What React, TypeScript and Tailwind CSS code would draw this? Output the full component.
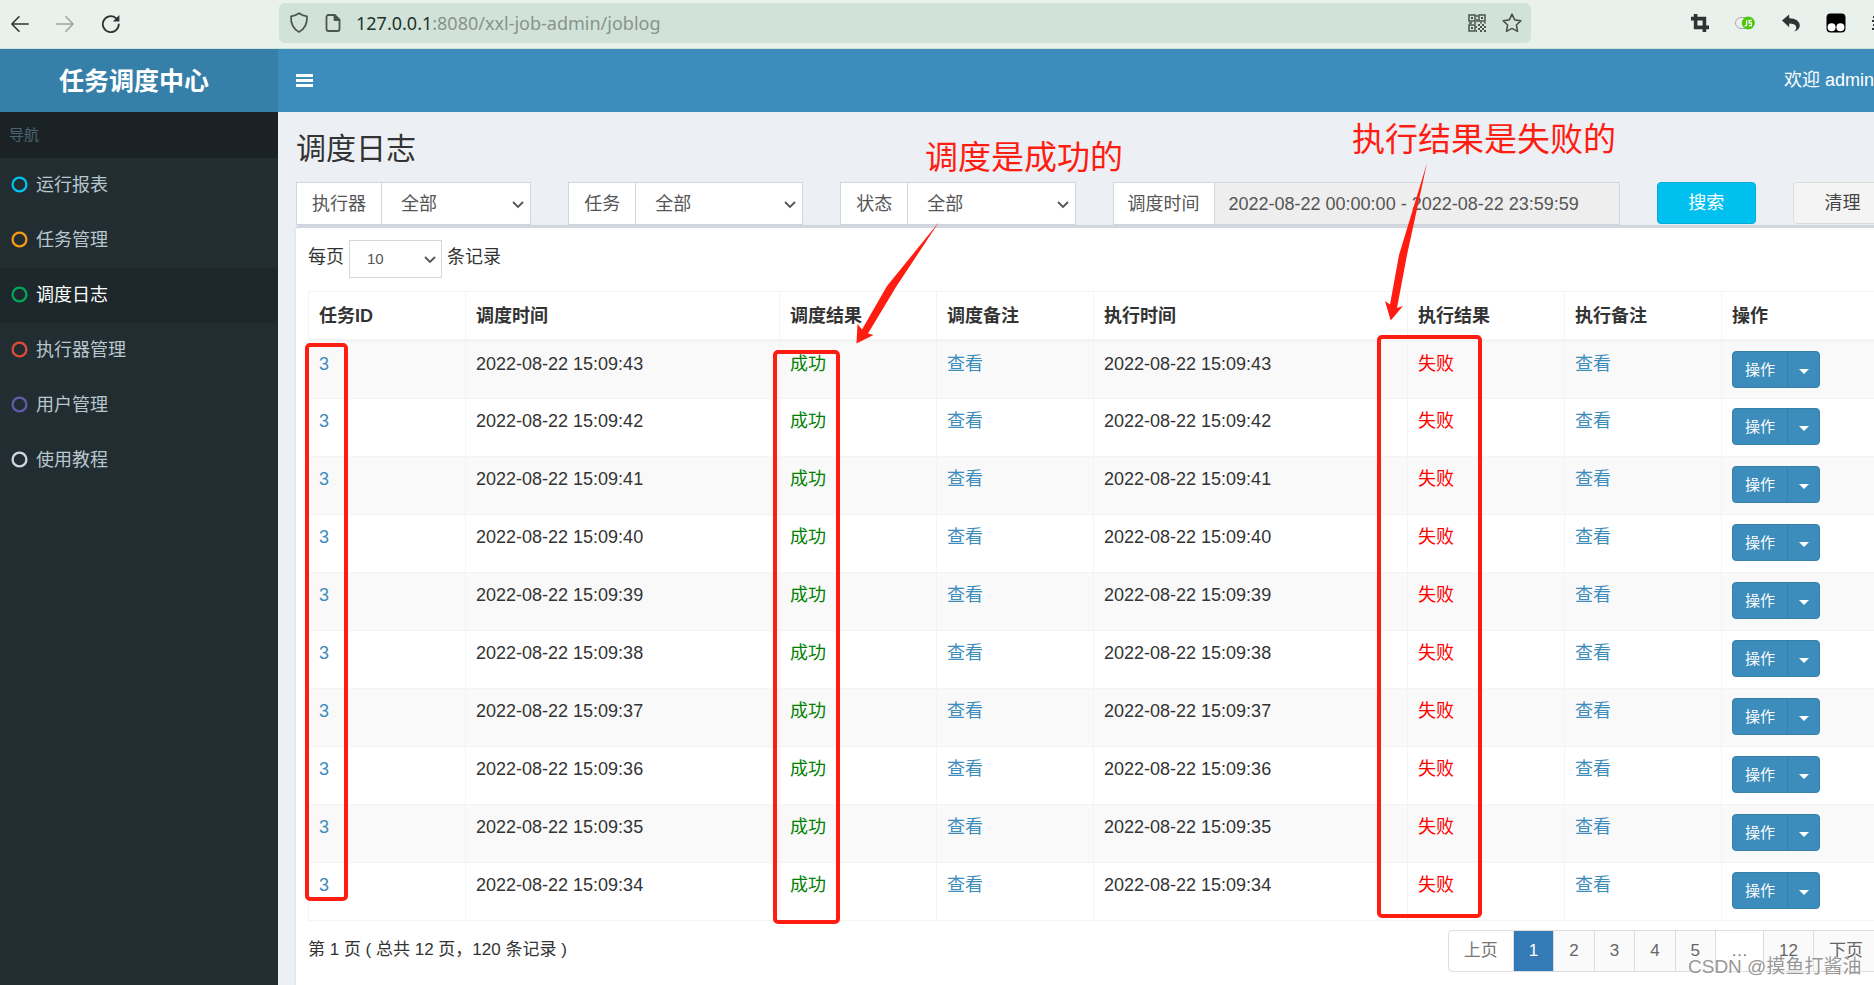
import { useState, type ReactNode } from "react";
import clsx from "clsx";

const navItems = [
  { label: "运行报表", color: "text-[#00c0ef]" },
  { label: "任务管理", color: "text-[#f39c12]" },
  { label: "调度日志", color: "text-[#00a65a]" },
  { label: "执行器管理", color: "text-[#dd4b39]" },
  { label: "用户管理", color: "text-[#605ca8]" },
  { label: "使用教程", color: "text-[#d2d6de]" },
];

const columns = [
  { label: "任务ID", width: "w-[10%]" },
  { label: "调度时间", width: "w-[20%]" },
  { label: "调度结果", width: "w-[10%]" },
  { label: "调度备注", width: "w-[10%]" },
  { label: "执行时间", width: "w-[20%]" },
  { label: "执行结果", width: "w-[10%]" },
  { label: "执行备注", width: "w-[10%]" },
  { label: "操作", width: "w-[10%]" },
];

const logs = [43, 42, 41, 40, 39, 38, 37, 36, 35, 34].map((second) => ({
  jobId: 3,
  time: `2022-08-22 15:09:${second}`,
}));

const pages = ["上页", "1", "2", "3", "4", "5", "…", "12", "下页"];

function Chevron({ className }: { className?: string }) {
  return (
    <svg
      viewBox="0 0 12 8"
      className={clsx("pointer-events-none absolute h-2 w-3", className)}
      fill="none"
      stroke="#555"
      strokeWidth="1.8"
      aria-hidden="true"
    >
      <path d="M1 1l5 5 5-5" />
    </svg>
  );
}

function BrowserBar() {
  return (
    <div className="flex h-[49px] items-center overflow-hidden border-b border-[#d0e2d8] bg-[#e9f1ec] text-[#2f3432]">
      <div className="flex w-[279px] shrink-0 items-center gap-[27px] pl-[11px]">
        <button type="button" aria-label="Back">
          <svg viewBox="0 0 18 18" className="size-[18px]" fill="none" stroke="currentColor" strokeWidth="1.6" strokeLinecap="round" strokeLinejoin="round">
            <path d="M17.2 9H1M8 1.8L.9 9 8 16.2" />
          </svg>
        </button>
        <button type="button" aria-label="Forward" className="text-[#9da4a0]">
          <svg viewBox="0 0 18 18" className="size-[18px]" fill="none" stroke="currentColor" strokeWidth="1.6" strokeLinecap="round" strokeLinejoin="round">
            <path d="M.8 9H17M10 1.8L17.1 9 10 16.2" />
          </svg>
        </button>
        <button type="button" aria-label="Reload">
          <svg viewBox="0 0 20 20" className="size-5" fill="none" stroke="currentColor" strokeWidth="1.8" strokeLinecap="round">
            <path d="M17.8 10.3A8 8 0 1 1 15 4.1" />
            <path d="M18.4 1v6.6h-6.6z" fill="currentColor" stroke="none" />
          </svg>
        </button>
      </div>

      <div className="mb-[3px] flex h-10 min-w-0 flex-1 items-center rounded-md bg-[#d1e3d9] pl-[10px] pr-[9px] text-[#4b5450]">
        <svg viewBox="0 0 20 21" className="h-[21px] w-5 shrink-0" fill="none" stroke="currentColor" strokeWidth="1.7" strokeLinejoin="round">
          <path d="M10 1.2c2.5 1.8 5 2.7 8 3.1.3 6.5-1.5 12.5-8 15.6C3.5 16.8 1.7 10.8 2 4.3c3-.4 5.5-1.3 8-3.1z" />
        </svg>
        <svg viewBox="0 0 16 18" className="ml-4 h-[18px] w-4 shrink-0" fill="none" stroke="currentColor" strokeWidth="1.8" strokeLinejoin="round">
          <path d="M9.5 1h-6a2 2 0 0 0-2 2v12a2 2 0 0 0 2 2h9a2 2 0 0 0 2-2V6z" />
          <path d="M9.5 1v5h5z" fill="currentColor" />
        </svg>
        <div className="ml-[15px] min-w-0 flex-1 truncate font-['Noto_Sans',sans-serif] text-[18px] text-[#87938d]">
          <span className="text-[#26302b]">127.0.0.1</span>:8080/xxl-job-admin/joblog
        </div>
        <button type="button" aria-label="QR code">
          <svg viewBox="0 0 18 18" className="size-[18px]" fill="none" stroke="currentColor" strokeWidth="1.5">
            <path d="M1 1h6v6H1zM11 1h6v6h-6zM1 11h6v6H1z" />
            <path d="M3 3h2v2H3zM13 3h2v2h-2zM3 13h2v2H3zM8.2 1h1.6v2H8.2zM8.2 5h1.6v3H8.2zM1 8.2h3v1.6H1zM6 8.2h2v1.6H6zM10 10h2v2h-2zM14 10h2v2h-2zM12 12h2v2h-2zM16 12h2v2h-2zM10 14h2v2h-2zM14 14h2v2h-2zM12 16h2v2h-2zM16 16h2v2h-2zM12 8.2h2v1.2h-2zM16 8.2h2v1.2h-2zM8 12h1v2H8zM8 16h1v2H8z" fill="currentColor" stroke="none" />
          </svg>
        </button>
        <button type="button" aria-label="Bookmark" className="ml-4">
          <svg viewBox="0 0 20 20" className="size-5" fill="none" stroke="currentColor" strokeWidth="1.6" strokeLinejoin="round">
            <path d="M10 1.2l2.7 5.7 6.2.8-4.5 4.3 1.1 6.4-5.5-3-5.5 3 1.1-6.4L1.1 7.7l6.2-.8z" />
          </svg>
        </button>
      </div>

      <div className="flex w-[343px] shrink-0 items-center justify-end pb-[3px]">
        <svg viewBox="0 0 18 18" className="size-[18px]" fill="none" stroke="currentColor" strokeWidth="3.6">
          <path d="M4.6 0v13.4H18M0 4.6h13.4V18" />
        </svg>
        <svg viewBox="0 0 20 14" className="ml-[26px] h-[14px] w-5">
          <rect x=".5" y="1.5" width="16" height="11" rx="5.5" fill="#eee" stroke="#aaa" />
          <circle cx="13.3" cy="7" r="6.5" fill="#4cc70c" />
          <path d="M11.6 4.2v4.6q0 1-1.2 1h-.8M16.8 4.4h-2.6v2.5h2.2v2.7h-2.6" fill="none" stroke="#fff" strokeWidth="1.3" />
        </svg>
        <svg viewBox="0 0 18 18" className="ml-[27px] size-[18px]" fill="currentColor">
          <path d="M0 6.6L7.2.5v3.8c6.5.2 10.6 3 10.6 7.3 0 3-2.2 5.2-5.8 6 2-1.6 2.7-3.3 2-5.2-.8-2-3-2.8-6.8-2.8v3.6z" />
        </svg>
        <svg viewBox="0 0 20 20" className="ml-[26px] size-5">
          <rect x=".5" y=".5" width="19" height="19" rx="4" fill="#000" />
          <circle cx="5.6" cy="14.2" r="4" fill="#fff" />
          <circle cx="14.4" cy="14.2" r="4" fill="#fff" />
        </svg>
        <svg viewBox="0 0 2 14" className="ml-[26px] h-[14px] w-[2px]" fill="currentColor">
          <path d="M1 0h1v2H1zM0 4h2v2H0zM1 8h1v2H1zM0 12h2v2H0z" />
        </svg>
      </div>
    </div>
  );
}

function FilterSelect({ id, label }: { id: string; label: string }) {
  return (
    <div className="flex h-[43px] border border-[#d2d6de] bg-white text-[#555]">
      <label htmlFor={id} className="flex shrink-0 items-center border-r border-[#d2d6de] px-[15px]">
        {label}
      </label>
      <div className="relative flex-1">
        <select id={id} className="h-full w-full appearance-none bg-transparent pl-[19px] outline-none">
          <option>全部</option>
        </select>
        <Chevron className="right-[6px] top-[18px]" />
      </div>
    </div>
  );
}

function ActionButton() {
  return (
    <div className="flex h-[37px] w-[88px] overflow-hidden rounded border border-[#367fa9] bg-[#3c8dbc] text-[15px] text-white">
      <button type="button" className="flex-1 border-r border-[#367fa9]">
        操作
      </button>
      <button type="button" aria-label="更多操作" className="flex w-[31px] items-center justify-center">
        <svg viewBox="0 0 10 5" className="mt-1 h-[5px] w-[10px]" fill="currentColor">
          <path d="M0 0h10L5 5z" />
        </svg>
      </button>
    </div>
  );
}

function Cell({ children }: { children: ReactNode }) {
  return <td className="h-[58px] border border-[#f4f4f4] py-[9px] pl-[10px] align-top">{children}</td>;
}

/** Hand-drawn notes that float over the log table. */
function Annotations() {
  return (
    <div className="pointer-events-none absolute inset-0 text-[#ff1d12]">
      <div className="absolute left-[925px] top-[134px] whitespace-nowrap text-[33px] leading-[48px]">调度是成功的</div>
      <div className="absolute left-[1352px] top-[116px] whitespace-nowrap text-[33px] leading-[48px]">执行结果是失败的</div>
      <svg className="absolute left-0 top-0" width="1874" height="985" viewBox="0 0 1874 985" fill="currentColor">
        <path d="M939 222L887 286 862 329.500 857.500 324 856.500 343.500 873.500 335 868 333.500 896 287z" />
        <path d="M1427 163L1399 255 1390 304.500 1385 301 1390.700 320.500 1403 306 1397 308 1407 255z" />
      </svg>
      <div className="absolute left-[305px] top-[343px] h-[558px] w-[43px] rounded-[5px] border-4" />
      <div className="absolute left-[773px] top-[350px] h-[574px] w-[67px] rounded-[5px] border-4" />
      <div className="absolute left-[1377px] top-[335px] h-[583px] w-[105px] rounded-[5px] border-4" />
      <div className="absolute left-[1688px] top-[953px] whitespace-nowrap text-[19px] leading-[28px] text-[#8a8a8a]/90 [text-shadow:1px_1px_0_#fff]">
        CSDN @摸鱼打酱油
      </div>
    </div>
  );
}

export default function App() {
  const [active, setActive] = useState("调度日志");

  return (
    <div className="relative flex min-h-screen flex-col overflow-hidden bg-[#ecf0f5] font-['Liberation_Sans','Noto_Sans_CJK_SC',sans-serif] text-[18px] leading-[26px] text-[#333]">
      <BrowserBar />

      {/* Header */}
      <header className="flex h-[63px] text-white">
        <a href="#home" className="flex w-[278px] shrink-0 items-center justify-center bg-[#367fa9] pr-[10px] text-[25px] font-bold">
          任务调度中心
        </a>
        <div className="flex min-w-0 flex-1 items-center justify-between bg-[#3c8dbc] pb-px pl-[18px]">
          <button type="button" aria-label="切换导航">
            <svg viewBox="0 0 17 13" className="h-[13px] w-[17px]" fill="currentColor">
              <path d="M0 0h17v3H0zM0 5h17v3H0zM0 10h17v3H0z" />
            </svg>
          </button>
          <a href="#user" className="whitespace-nowrap">
            欢迎 admin
          </a>
        </div>
      </header>

      <div className="flex flex-1">
        {/* Sidebar */}
        <aside className="w-[278px] shrink-0 bg-[#222d32]">
          <div className="flex h-[46px] items-center bg-[#1a2226] pl-[9px] text-[15px] text-[#4b646f]">导航</div>
          <nav>
            {navItems.map((item) => (
              <a
                key={item.label}
                href="#nav"
                onClick={() => setActive(item.label)}
                className={clsx(
                  "flex h-[55px] items-center gap-2 pb-[2px] pl-[11px]",
                  active === item.label ? "bg-[#1e282c] text-white" : "text-[#b8c7ce]",
                )}
              >
                <svg viewBox="0 0 17 17" className={clsx("size-[17px]", item.color)} fill="none" stroke="currentColor" strokeWidth="2.3">
                  <circle cx="8.5" cy="8.5" r="6.9" />
                </svg>
                {item.label}
              </a>
            ))}
          </nav>
        </aside>

        {/* Content, wider than the window on the right */}
        <main className="-mr-[18px] flex min-w-0 flex-1 flex-col pl-[18px]">
          <h1 className="pt-[19px] text-[30px] leading-9">调度日志</h1>

          <form className="mt-[15px] grid grid-cols-12 gap-x-[37px]" onSubmit={(e) => e.preventDefault()}>
            <div className="col-span-2">
              <FilterSelect id="group" label="执行器" />
            </div>
            <div className="col-span-2">
              <FilterSelect id="job" label="任务" />
            </div>
            <div className="col-span-2">
              <FilterSelect id="status" label="状态" />
            </div>
            <div className="col-span-4 flex h-[43px] border border-[#d2d6de] bg-white text-[#555]">
              <label htmlFor="time" className="flex shrink-0 items-center border-r border-[#d2d6de] px-[14px]">
                调度时间
              </label>
              <input
                id="time"
                readOnly
                defaultValue="2022-08-22 00:00:00 - 2022-08-22 23:59:59"
                className="min-w-0 flex-1 bg-[#eee] pl-[14px] outline-none"
              />
            </div>
            <button type="submit" className="h-[42px] rounded border border-[#00acd6] bg-[#00c0ef] text-white">
              搜索
            </button>
            <button type="button" className="h-[42px] rounded border border-[#ddd] bg-[#f4f4f4] text-[#444]">
              清理
            </button>
          </form>

          {/* Log box */}
          <section className="flex-1 rounded-t border-t-[3px] border-[#d2d6de] bg-white pl-3 pr-[13px] pt-3 shadow-sm">
            <div className="flex h-[38px] items-center gap-[5px]">
              <label htmlFor="pageSize" className="pb-1">
                每页
              </label>
              <div className="relative h-[38px] w-[93px]">
                <select id="pageSize" className="h-full w-full appearance-none border border-[#d2d6de] bg-white pl-[17px] text-[15px] text-[#555] outline-none">
                  <option>10</option>
                </select>
                <Chevron className="right-[6px] top-4" />
              </div>
              <span className="pb-1">条记录</span>
            </div>

            <table className="mt-[13px] w-full table-fixed border-collapse">
              <thead>
                <tr>
                  {columns.map((col) => (
                    <th
                      key={col.label}
                      className={clsx("h-[49px] border border-b-[3px] border-[#f4f4f4] pl-[10px] text-left font-bold", col.width)}
                    >
                      {col.label}
                    </th>
                  ))}
                </tr>
              </thead>
              <tbody>
                {logs.map((log) => (
                  <tr key={log.time} className="odd:bg-[#f9f9f9]">
                    <Cell>
                      <a href="#job" className="text-[#3c8dbc]">{log.jobId}</a>
                    </Cell>
                    <Cell>{log.time}</Cell>
                    <Cell>
                      <span className="text-[#008000]">成功</span>
                    </Cell>
                    <Cell>
                      <a href="#trigger" className="text-[#3c8dbc]">查看</a>
                    </Cell>
                    <Cell>{log.time}</Cell>
                    <Cell>
                      <span className="text-[#ff0000]">失败</span>
                    </Cell>
                    <Cell>
                      <a href="#handle" className="text-[#3c8dbc]">查看</a>
                    </Cell>
                    <Cell>
                      <ActionButton />
                    </Cell>
                  </tr>
                ))}
              </tbody>
            </table>

            <div className="mt-[9px] flex items-start justify-between pb-3 text-[17px]">
              <p className="pt-[7px]">第 1 页 ( 总共 12 页，120 条记录 )</p>
              <nav className="flex h-[42px] overflow-hidden rounded border border-[#ddd]" aria-label="分页">
                {pages.map((page) => (
                  <a
                    key={page}
                    href="#page"
                    className={clsx(
                      "-my-px flex items-center border-[#ddd] px-[15px] not-last:border-r",
                      page === "1" && "bg-[#337ab7] text-white",
                      (page === "上页" || page === "…") && "text-[#777]",
                      !["上页", "1", "…"].includes(page) && "bg-[#fafafa] text-[#666]",
                    )}
                  >
                    {page}
                  </a>
                ))}
              </nav>
            </div>
          </section>
        </main>
      </div>

      <Annotations />
    </div>
  );
}
